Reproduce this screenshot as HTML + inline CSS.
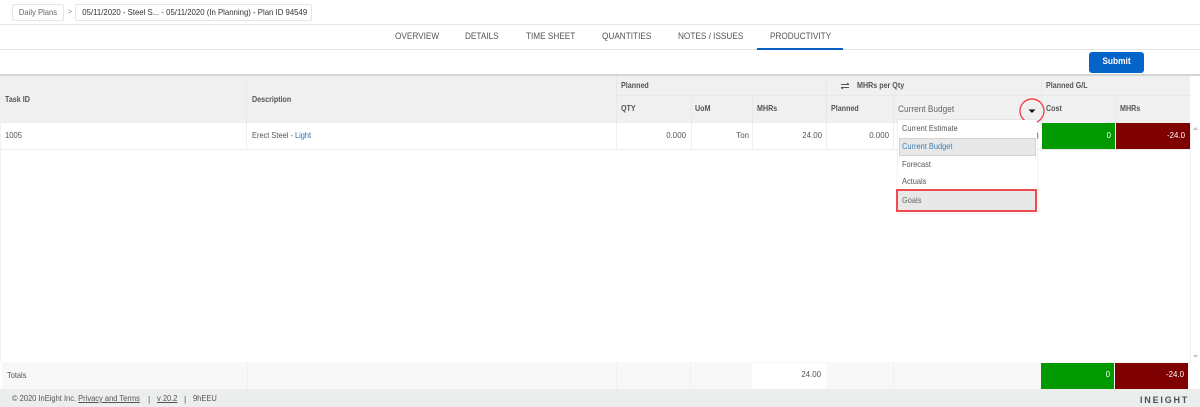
<!DOCTYPE html>
<html>
<head>
<meta charset="utf-8">
<style>
html,body{margin:0;padding:0;background:#fff}
#p{position:relative;width:1200px;height:407px;overflow:hidden;background:#fff;font-family:"Liberation Sans",sans-serif;font-size:8.5px;color:#555;filter:blur(.25px)}
#p div{position:absolute;box-sizing:border-box;white-space:nowrap}
.t{line-height:12px}
.b{font-weight:bold;color:#555;transform:scaleX(.84);transform-origin:0 50%}
.s{transform:scaleX(.875);transform-origin:0 50%}
.f{font-size:8px;transform:scaleX(.94);transform-origin:0 50%}
.tab{top:30px;font-size:9.5px;color:#555;line-height:13px;transform:scaleX(.865);transform-origin:0 50%}
.r{text-align:right;transform:scaleX(.93);transform-origin:100% 50%}
</style>
</head>
<body>
<div id="p">
  <!-- breadcrumb -->
  <div style="left:12px;top:4px;width:52px;height:17px;border:1px solid #e6e6e6;border-radius:2px;background:#fff"></div>
  <div class="t" style="left:12px;top:6px;width:52px;color:#666;text-align:center;transform:scaleX(.9)">Daily Plans</div>
  <div class="t" style="left:68px;top:7px;color:#888;font-size:7px">&gt;</div>
  <div style="left:75px;top:4px;width:237px;height:17px;border:1px solid #e6e6e6;border-radius:2px;background:#fff"></div>
  <div class="t" style="left:74px;top:6px;width:237px;color:#333;text-align:center;font-size:8.4px;transform:scaleX(.93)">05/11/2020 - Steel S... - 05/11/2020 (In Planning) - Plan ID 94549</div>
  <div style="left:0;top:24px;width:1200px;height:1px;background:#e6e6e6"></div>

  <!-- tabs -->
  <div class="tab" style="left:395px">OVERVIEW</div>
  <div class="tab" style="left:465px">DETAILS</div>
  <div class="tab" style="left:526px">TIME SHEET</div>
  <div class="tab" style="left:602px">QUANTITIES</div>
  <div class="tab" style="left:678px">NOTES / ISSUES</div>
  <div class="tab" style="left:770px">PRODUCTIVITY</div>
  <div style="left:0;top:49px;width:1200px;height:1px;background:#e6e6e6"></div>
  <div style="left:757px;top:48px;width:86px;height:2px;background:#0a5fc0"></div>

  <!-- submit -->
  <div style="left:1089px;top:52px;width:55px;height:21px;background:#0564c8;border-radius:3px"></div>
  <div style="left:1089px;top:52px;width:55px;height:21px;color:#fff;font-weight:bold;font-size:9.5px;text-align:center;line-height:20px;transform:scaleX(.88)">Submit</div>

  <!-- header -->
  <div style="left:0;top:74px;width:1200px;height:2px;background:#d6d6d6"></div>
  <div style="left:0;top:76px;width:1190px;height:47px;background:#f0f0f0"></div>
  <div style="left:617px;top:95px;width:573px;height:1px;background:#e8e8e8"></div>
  <div style="left:246px;top:76px;width:1px;height:47px;background:#e8e8e8"></div>
  <div style="left:616px;top:76px;width:1px;height:47px;background:#e8e8e8"></div>
  <div style="left:691px;top:96px;width:1px;height:27px;background:#e8e8e8"></div>
  <div style="left:752px;top:96px;width:1px;height:27px;background:#e8e8e8"></div>
  <div style="left:826px;top:76px;width:1px;height:47px;background:#e8e8e8"></div>
  <div style="left:893px;top:96px;width:1px;height:27px;background:#e8e8e8"></div>
  <div style="left:1041px;top:76px;width:1px;height:47px;background:#e8e8e8"></div>
  <div style="left:1115px;top:96px;width:1px;height:27px;background:#e8e8e8"></div>

  <div class="t b" style="left:5px;top:93px">Task ID</div>
  <div class="t b" style="left:252px;top:93px">Description</div>
  <div class="t b" style="left:621px;top:79px">Planned</div>
  <div class="t b" style="left:621px;top:102px">QTY</div>
  <div class="t b" style="left:695px;top:102px">UoM</div>
  <div class="t b" style="left:757px;top:102px">MHRs</div>
  <svg style="position:absolute;left:840px;top:82px" width="10" height="8" viewBox="0 0 10 8"><path d="M1 2.500H9M7 1L9 2.500M9 5.500H1M3 7L1 5.500" stroke="#555" stroke-width="1" fill="none"/></svg>
  <div class="t b" style="left:857px;top:79px">MHRs per Qty</div>
  <div class="t b" style="left:831px;top:102px">Planned</div>
  <div class="t" style="left:898px;top:103px;color:#666;font-size:9px;transform:scaleX(.92);transform-origin:0 50%">Current Budget</div>
  <div class="t b" style="left:1046px;top:79px">Planned G/L</div>
  <div class="t b" style="left:1046px;top:102px">Cost</div>
  <div class="t b" style="left:1120px;top:102px">MHRs</div>

  <!-- caret + circle -->
  <svg style="position:absolute;left:1017px;top:97px" width="30" height="28" viewBox="0 0 30 28"><circle cx="15" cy="14" r="12" stroke="#ee4a4f" stroke-width="1.4" fill="none"/><path d="M11.500 12.500H18.500L15 16Z" fill="#111"/></svg>

  <!-- row -->
  <div style="left:0;top:149px;width:1190px;height:1px;background:#eeeeee"></div>
  <div style="left:246px;top:123px;width:1px;height:26px;background:#eeeeee"></div>
  <div style="left:616px;top:123px;width:1px;height:26px;background:#eeeeee"></div>
  <div style="left:691px;top:123px;width:1px;height:26px;background:#eeeeee"></div>
  <div style="left:752px;top:123px;width:1px;height:26px;background:#eeeeee"></div>
  <div style="left:826px;top:123px;width:1px;height:26px;background:#eeeeee"></div>
  <div style="left:893px;top:123px;width:1px;height:26px;background:#eeeeee"></div>
  <div class="t" style="left:5px;top:129px;transform:scaleX(.9);transform-origin:0 50%">1005</div>
  <div class="t s" style="left:252px;top:129px">Erect Steel - <span style="color:#3a6ea5">Light</span></div>
  <div class="t r" style="left:617px;top:129px;width:69px">0.000</div>
  <div class="t r" style="left:692px;top:129px;width:57px">Ton</div>
  <div class="t r" style="left:753px;top:129px;width:69px">24.00</div>
  <div class="t r" style="left:827px;top:129px;width:62px">0.000</div>
  <div class="t" style="left:1036px;top:129px">)</div>
  <div style="left:1042px;top:123px;width:73px;height:26px;background:#009a00"></div>
  <div style="left:1116px;top:123px;width:74px;height:26px;background:#7f0000"></div>
  <div class="t r" style="left:1042px;top:129px;width:69px;color:#fff">0</div>
  <div class="t r" style="left:1116px;top:129px;width:69px;color:#fff">-24.0</div>

  <!-- dropdown -->
  <div style="left:898px;top:120px;width:139px;height:93px;background:#fff;box-shadow:0 0 2px rgba(0,0,0,.14)"></div>
  <div class="t s" style="left:902px;top:122px;color:#555">Current Estimate</div>
  <div style="left:899px;top:138px;width:137px;height:18px;background:#e8e8e8;border:1px solid #d2d2d2"></div>
  <div class="t s" style="left:902px;top:140px;color:#3a7fb8">Current Budget</div>
  <div class="t s" style="left:902px;top:158px;color:#555">Forecast</div>
  <div class="t s" style="left:902px;top:175px;color:#555">Actuals</div>
  <div style="left:896px;top:189px;width:141px;height:23px;background:#e8e8e8;border:2px solid #ee4a4f"></div>
  <div class="t s" style="left:902px;top:194px;color:#666">Goals</div>

  <!-- scrollbar -->
  <svg style="position:absolute;left:1190px;top:123px" width="10" height="240" viewBox="0 0 10 240"><path d="M3 7H8L5.500 4Z" fill="#c4c4c4"/><path d="M3 232H8L5.500 235Z" fill="#c4c4c4"/></svg>
  <div style="left:1190px;top:123px;width:1px;height:239px;background:#eeeeee"></div>
  <div style="left:0;top:123px;width:1px;height:239px;background:#f2f2f2"></div>

  <!-- totals -->
  <div style="left:2px;top:362px;width:1188px;height:27px;background:#f8f8f8"></div>
  <div style="left:247px;top:362px;width:1px;height:27px;background:#f0f0f0"></div>
  <div style="left:616px;top:362px;width:1px;height:27px;background:#f0f0f0"></div>
  <div style="left:690px;top:362px;width:1px;height:27px;background:#f0f0f0"></div>
  <div style="left:752px;top:363px;width:74px;height:26px;background:#fff"></div>
  <div style="left:893px;top:362px;width:1px;height:27px;background:#f0f0f0"></div>
  <div class="t s" style="left:7px;top:369px">Totals</div>
  <div class="t r" style="left:753px;top:368px;width:68px">24.00</div>
  <div style="left:1041px;top:363px;width:73px;height:26px;background:#009a00"></div>
  <div style="left:1115px;top:363px;width:73px;height:26px;background:#7f0000"></div>
  <div class="t r" style="left:1041px;top:368px;width:69px;color:#fff">0</div>
  <div class="t r" style="left:1115px;top:368px;width:69px;color:#fff">-24.0</div>

  <!-- footer -->
  <div style="left:0;top:389px;width:1200px;height:18px;background:#eceeee"></div>
  <div class="t f" style="left:12px;top:393px;color:#555">© 2020 InEight Inc. <span style="text-decoration:underline">Privacy and Terms</span></div>
  <div class="t" style="left:148px;top:393px;color:#555">|</div>
  <div class="t f" style="left:157px;top:393px;color:#555;text-decoration:underline">v 20.2</div>
  <div class="t" style="left:184px;top:393px;color:#555">|</div>
  <div class="t f" style="left:193px;top:393px;color:#555">9hEEU</div>
  <div class="t" style="left:1140px;top:394px;color:#4a5258;font-weight:bold;font-size:9px;letter-spacing:1.8px">INEIGHT</div>
</div>
</body>
</html>
